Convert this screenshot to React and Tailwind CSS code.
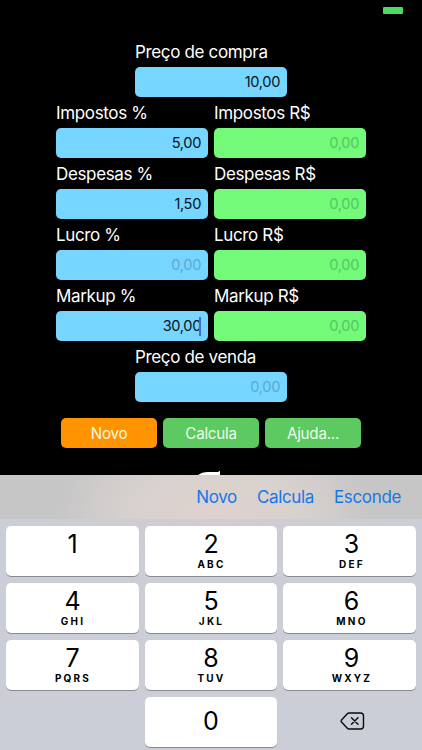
const BLUE = 'bg-[#76d6ff]';
const GREEN = 'bg-[#73fa79]';

function Field({ label, value, green, active }) {
  return (
    <div className="w-[152px]">
      <div className="h-[31.15px] pt-[5px] whitespace-nowrap text-[17px] leading-[22px] tracking-[-0.35px] text-white">
        {label}
      </div>
      <div
        className={`flex h-[30px] items-center justify-end rounded-[5px] pr-[7px] pt-[1.6px] text-[14.6px] tracking-[-0.35px] ${green ? GREEN : BLUE} ${
          value ? 'text-[#06141b]' : green ? 'text-[#57c665]' : 'text-[#5aaad0]'
        }`}
      >
        <span className="relative">
          {value || '0,00'}
          {active && <i className="absolute right-0 top-[1px] h-[19px] w-[2px] bg-[#3f6be8]" />}
        </span>
      </div>
    </div>
  );
}

function Key({ digit, letters, shifted }) {
  return (
    <div
      className={`flex h-[50px] flex-col items-center rounded-[5px] bg-white text-black shadow-[0_1px_0_#898b8f] ${
        digit === '0' ? 'pt-[9px]' : 'pt-[3px]'
      } ${shifted ? 'pl-[4px]' : ''}`}
    >
      <span className="text-[25px] leading-[30px]">{digit}</span>
      {letters && (
        <span className="mt-[-1px] pl-[1px] text-[10px] font-bold leading-[12px] tracking-[2.2px]">{letters}</span>
      )}
    </div>
  );
}

const ROWS = [
  ['Impostos', '5,00'],
  ['Despesas', '1,50'],
  ['Lucro', ''],
  ['Markup', '30,00'],
];

const KEYS = [
  ['1', ''], ['2', 'ABC'], ['3', 'DEF'],
  ['4', 'GHI'], ['5', 'JKL'], ['6', 'MNO'],
  ['7', 'PQRS'], ['8', 'TUV'], ['9', 'WXYZ'],
];

export default function App() {
  return (
    <div className="flex h-[750px] w-[422px] flex-col overflow-hidden bg-black font-['Inter','Liberation_Sans',sans-serif]">
      <header className="flex h-[35.6px] shrink-0 justify-end pr-[19px] pt-[7px]">
        <div className="h-[7px] w-[20px] rounded-[1px] bg-[#4cd964]" />
      </header>
      <main className="flex h-[439.4px] shrink-0 flex-col items-center">
        <Field label="Preço de compra" value="10,00" />
        {ROWS.map(([name, value]) => (
          <div key={name} className="flex gap-[6px]">
            <Field label={`${name} %`} value={value} active={name === 'Markup'} />
            <Field label={`${name} R$`} green />
          </div>
        ))}
        <Field label="Preço de venda" />
        <div className="mt-[15.5px] flex gap-[5.5px] text-[15.2px] tracking-[-0.25px] text-[#effbe9]">
          <div className="flex h-[30px] w-[96.5px] items-center justify-center rounded-[5px] bg-[#ff9300] pt-[2px]">Novo</div>
          <div className="flex h-[30px] w-[96.5px] items-center justify-center rounded-[5px] bg-[#5cc961] pt-[2px]">Calcula</div>
          <div className="flex h-[30px] w-[96.5px] items-center justify-center rounded-[5px] bg-[#5cc961] pt-[2px]">Ajuda...</div>
        </div>
        <svg className="mt-auto mr-[2px] block h-[5px] w-[24px]" viewBox="0 0 24 5">
          <path d="M0 5 Q4 2 9 2 L20 2 L22 .8 V5Z" fill="#fff" />
        </svg>
      </main>
      <section className="flex h-[275px] shrink-0 flex-col bg-[#cbced6]">
        <div className="flex h-[44.5px] shrink-0 items-center justify-end gap-[20px] bg-[radial-gradient(ellipse_160px_110px_at_215px_100%,#ded2cd_0%,#d7d1ce_55%,#c6c6c6_100%)] pr-[21px] pt-[2px] text-[17px] tracking-[-0.35px] text-[#1677e8]">
          <span>Novo</span>
          <span>Calcula</span>
          <span>Esconde</span>
        </div>
        <div className="grid flex-1 grid-cols-3 content-start gap-x-[6px] gap-y-[7.15px] bg-[radial-gradient(ellipse_130px_40px_at_215px_0,#d5c9ce_0%,#cbced6_100%)] px-[6.3px] pt-[6.2px]">
          {KEYS.map(([digit, letters], index) => (
            <Key key={digit} digit={digit} letters={letters} shifted={index % 3 === 2} />
          ))}
          <div />
          <Key digit="0" />
          <div className="flex items-center justify-center pb-[3px] pl-[6px]">
            <svg className="h-[18px] w-[25px]" viewBox="0 0 25 18" fill="none" stroke="#090b0d" strokeLinecap="round" strokeLinejoin="round">
              <path d="M9 1 H20.5 Q23.5 1 23.5 4 V14 Q23.5 17 20.5 17 H9 Q8 17 7.3 16.2 L1.5 10 Q.8 9 1.5 8 L7.3 1.8 Q8 1 9 1Z" strokeWidth="1.4" />
              <path d="M11.5 5.7 L18 12.3 M18 5.7 L11.5 12.3" strokeWidth="1.4" />
            </svg>
          </div>
        </div>
      </section>
    </div>
  );
}
